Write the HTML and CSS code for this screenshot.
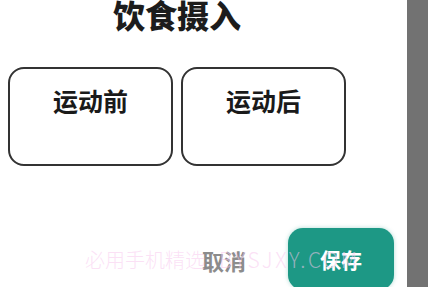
FILE: index.html
```html
<!DOCTYPE html>
<html lang="zh-CN">
<head>
<meta charset="utf-8">
<title>饮食摄入</title>
<link rel="stylesheet" href="styles.css">
</head>
<body>
<div class="screen">
  <div class="dialog">
    <div class="content">
      <h1 class="title">饮食摄入</h1>
      <div class="options">
        <div class="option">运动前</div>
        <div class="option">运动后</div>
      </div>
    </div>
    <div class="footer">
      <button class="btn-cancel">取消</button>
      <button class="btn-save">保存</button>
    </div>
    <div class="watermark">必用手机精选<span class="wm-latin">BYSJXY.COM</span></div>
  </div>
  <div class="side"></div>
</div>
</body>
</html>
```
FILE: styles.css
```css
html, body {
  margin: 0;
  padding: 0;
  background: #ffffff;
  overflow: hidden;
}
body {
  font-family: "Noto Sans CJK SC", "Noto Sans", sans-serif;
}
.screen {
  display: flex;
  width: 428px;
  height: 287px;
}
.dialog {
  position: relative;
  width: 407px;
  height: 287px;
  background: #ffffff;
  display: flex;
  flex-direction: column;
}
.side {
  flex: 1;
  background: #727272;
}
.content {
  width: 338px;
  padding-left: 8px;
  display: flex;
  flex-direction: column;
}
.title {
  margin: 0;
  text-align: center;
  font-size: 32px;
  line-height: 32px;
  font-weight: 900;
  color: #1c1c1c;
  padding-top: 0;
  height: 67px;
  box-sizing: border-box;
  margin-top: -2px;
}
.options {
  display: flex;
  gap: 8px;
  margin-top: 2px;
}
.option {
  flex: 1;
  height: 99px;
  box-sizing: border-box;
  border: 2px solid #333333;
  border-radius: 16px;
  text-align: center;
  font-size: 25px;
  line-height: 25px;
  font-weight: 700;
  color: #1a1a1a;
  padding-top: 19px;
}
.footer {
  display: flex;
  justify-content: flex-end;
  align-items: center;
  gap: 42px;
  padding-right: 13px;
  margin-top: 62px;
}
.btn-cancel {
  border: none;
  background: none;
  font-family: inherit;
  font-size: 22px;
  font-weight: 700;
  color: #8c8c8c;
  padding: 0;
  margin-top: 2px;
}
.btn-save {
  border: none;
  width: 106px;
  height: 62px;
  border-radius: 15px;
  background: #1d9885;
  color: #ffffff;
  font-family: inherit;
  font-size: 21px;
  font-weight: 700;
  box-shadow: 0 0 4px rgba(29, 152, 133, 0.35);
}
.watermark {
  position: absolute;
  left: 85px;
  top: 247px;
  font-size: 20px;
  line-height: 24px;
  font-weight: 300;
  color: rgba(248, 200, 238, 0.55);
  white-space: nowrap;
  pointer-events: none;
}
.wm-latin {
  margin-left: 14px;
  font-size: 21px;
  letter-spacing: 2.5px;
}
```
